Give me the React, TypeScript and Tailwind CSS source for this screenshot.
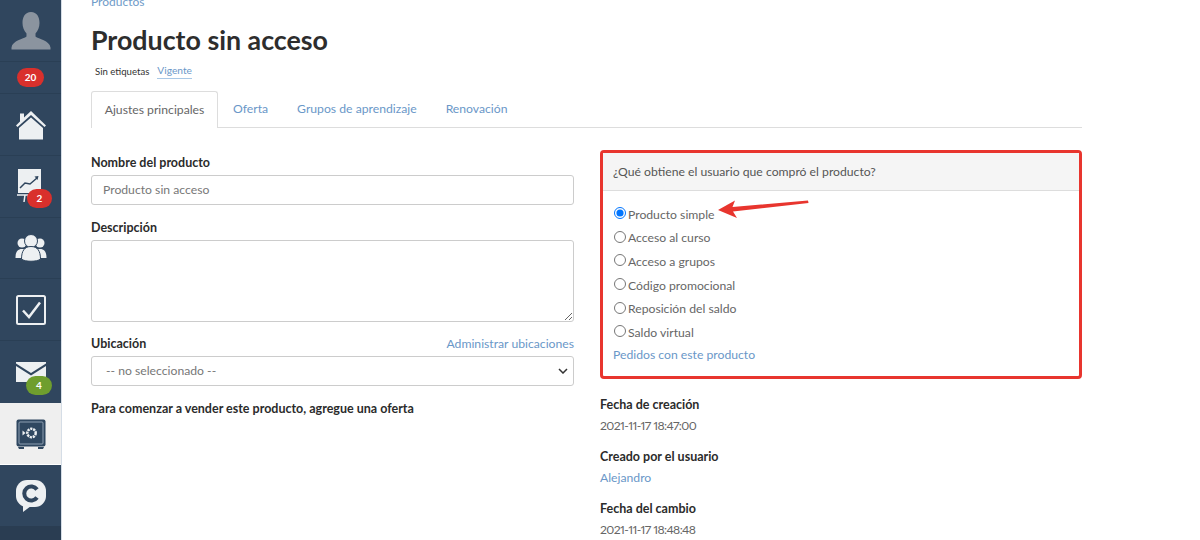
import React from "react";

const options = [
  "Producto simple",
  "Acceso al curso",
  "Acceso a grupos",
  "Código promocional",
  "Reposición del saldo",
  "Saldo virtual",
];

const tabs = ["Oferta", "Grupos de aprendizaje", "Renovación"];

function Badge({ text, color, className }: { text: string; color: string; className: string }) {
  return (
    <span
      className={`absolute flex h-[19px] items-center justify-center rounded-[10px] text-[10px] font-bold text-white ${color} ${className}`}
    >
      {text}
    </span>
  );
}

function Sidebar() {
  const cell = "relative flex items-center justify-center border-b border-[#2a3f55]";
  return (
    <aside className="flex h-[540px] w-[62px] shrink-0 flex-col border-r border-[#d5dde6] bg-[#30465e]">
      <div className={`${cell} h-[62px]`}>
        <svg width="40" height="40" viewBox="0 0 40 40">
          <path
            d="M20 1c6 0 8.500 5 8.500 11 0 4-1.500 8-4 10.500v3c3 2.500 14 4 15 11V38.500H0.500V36.500c1-7 12-8.500 15-11v-3c-2.500-2.500-4-6.500-4-10.500C11.500 6 14 1 20 1z"
            fill="#8b949f"
          />
        </svg>
      </div>
      <div className={`${cell} h-[32px]`}>
        <span className="flex h-[19px] w-[27px] items-center justify-center rounded-[10px] bg-[#d9302c] text-[10px] font-bold text-white">
          20
        </span>
      </div>
      <div className={`${cell} h-[62px]`}>
        <svg width="32" height="30" viewBox="0 0 32 30">
          <path d="M16 1 L31 15.500 L29.500 17 L16 5 L2.500 17 L1 15.500 L5 11.500 V3.500 H9 V7.500z" fill="#edf0f2" />
          <path d="M16 7.500 L28 18 V29.500 H4 V18z" fill="#edf0f2" />
        </svg>
      </div>
      <div className={`${cell} h-[62px]`}>
        <svg width="30" height="36" viewBox="0 0 30 36" className="mr-[6px]">
          <rect x="5" y="0" width="23" height="24" fill="#edf0f2" />
          <path d="M7 19 L12 14 L17 15 L24 9" fill="none" stroke="#30465e" strokeWidth="1.500" />
          <path d="M25.500 7 L21.500 7.500 L24.500 11z" fill="#30465e" />
          <path d="M4 26 H28 M12 26 L11 33 M15 26 L16 33" stroke="#edf0f2" strokeWidth="1.500" fill="none" />
        </svg>
        <Badge text="2" color="bg-[#d9302c]" className="left-[27px] top-[33px] w-[25px]" />
      </div>
      <div className={`${cell} h-[61px]`}>
        <svg width="32" height="28" viewBox="0 0 32 28">
          <circle cx="7" cy="9" r="4.500" fill="#edf0f2" />
          <circle cx="25" cy="9" r="4.500" fill="#edf0f2" />
          <path d="M0.500 24c0-6 2-9 6.500-9s6 3 6 9zM19 24c0-6 1.500-9 6-9s6.500 3 6.500 9z" fill="#edf0f2" />
          <circle cx="16" cy="7" r="6.500" fill="#edf0f2" stroke="#30465e" />
          <path d="M6.500 25c0-8 3-12.500 9.500-12.500S25.500 17 25.500 25c-3 3-16 3-19 0z" fill="#edf0f2" stroke="#30465e" />
        </svg>
      </div>
      <div className={`${cell} h-[62px]`}>
        <svg width="30" height="30" viewBox="0 0 30 30">
          <rect x="1" y="1" width="28" height="28" rx="1.500" fill="none" stroke="#edf0f2" strokeWidth="2" />
          <path d="M7 15.500 L13 22 L24 7.500" fill="none" stroke="#edf0f2" strokeWidth="2.500" />
        </svg>
      </div>
      <div className="relative flex h-[62px] items-center justify-center">
        <svg width="30" height="20" viewBox="0 0 30 20" className="mb-[1px]">
          <path d="M0 1.500 L15 11 L30 1.500 V0 H0z" fill="#edf0f2" />
          <path d="M0 4 L15 13.500 L30 4 V20 H0z" fill="#edf0f2" />
        </svg>
        <Badge text="4" color="bg-[#6f9e2e]" className="left-[26px] top-[35px] w-[26px]" />
      </div>
      <div className="flex h-[61px] items-center justify-center bg-[#efefef]">
        <svg width="30" height="30" viewBox="0 0 30 30">
          <rect x="0.500" y="0.500" width="29" height="27" rx="2" fill="#2f4760" />
          <rect x="3" y="3" width="24" height="22" rx="1" fill="none" stroke="#8ea0b2" strokeWidth="1" />
          <path d="M2 28h6v2H3zM22 28h6l-1 2h-5z" fill="#2f4760" />
          <circle cx="15.500" cy="14" r="4.200" fill="none" stroke="#edf0f2" strokeWidth="2.500" strokeDasharray="2.200 0.800" />
          <path d="M6.500 11.500 L9.500 14 L6.500 16.500z" fill="#edf0f2" />
        </svg>
      </div>
      <div className="h-[1px] bg-white" />
      <div className="flex h-[61px] items-center justify-center">
        <svg width="30" height="32" viewBox="0 0 30 32">
          <rect x="0" y="0" width="30" height="27" rx="11" fill="#edf0f2" />
          <path d="M7 23 L7 32 L15 26z" fill="#edf0f2" />
          <path d="M21 9.500 A7 7 0 1 0 21 17.500" fill="none" stroke="#30465e" strokeWidth="4" />
        </svg>
      </div>
      <div className="flex-1 bg-[#2a3d52]" />
    </aside>
  );
}

function Label({ children }: { children: React.ReactNode }) {
  return <div className="pt-[1px] text-[12.500px] font-bold leading-[18px] text-[#2b2b2b]">{children}</div>;
}

function Meta({ label, value, link }: { label: string; value: string; link?: boolean }) {
  return (
    <div className="h-[52px]">
      <Label>{label}</Label>
      <div
        className={`mt-[2px] leading-[20px] proportional-nums ${link ? "text-[#6a97c8]" : "tracking-[-0.600px] text-[#666]"}`}
      >
        {value}
      </div>
    </div>
  );
}

export default function App() {
  return (
    <div className="flex h-[540px] w-[1200px] overflow-hidden bg-white font-['Lato',sans-serif] text-[12.200px] text-[#666]">
      <Sidebar />
      <main className="w-[1020px] pl-[29px]">
        <div className="-mt-[7px] text-[12px] leading-[17px] text-[#6f9bc8]">Productos</div>
        <h1 className="mt-[14px] text-[26.800px] font-bold leading-[32px] text-[#2d2d2d]">Producto sin acceso</h1>
        <div className="mt-[5px] flex h-[18px] items-end pl-[4px]">
          <span className="text-[9.600px] text-[#333]">Sin etiquetas</span>
          <span className="ml-[8px] border-b border-[#a9c8e6] text-[10.200px] text-[#6a97c8]">Vigente</span>
        </div>
        <div className="mt-[12px] flex h-[37px] w-[991px] border-b border-[#ddd]">
          <div className="h-[37px] w-[127px] rounded-t-[3px] border border-b-0 border-[#ddd] bg-white pt-[9px] text-center leading-[18px] text-[#666]">
            Ajustes principales
          </div>
          <div className="flex gap-[29px] pl-[15px]">
            {tabs.map((t) => (
              <div key={t} className="pt-[9px] leading-[18px] text-[#6a97c8]">
                {t}
              </div>
            ))}
          </div>
        </div>
        <div className="mt-[25px] flex w-[991px] justify-between">
          <div className="w-[483px]">
            <Label>Nombre del producto</Label>
            <div className="mt-[3px] flex h-[30px] items-center rounded-[3px] border border-[#ccc] px-[11px] text-[#777]">
              Producto sin acceso
            </div>
            <div className="mt-[13px]">
              <Label>Descripción</Label>
            </div>
            <textarea className="mt-[3px] block h-[82px] w-full rounded-[3px] border border-[#ccc]" />
            <div className="mt-[12px] flex justify-between">
              <Label>Ubicación</Label>
              <span className="pt-[1px] leading-[18px] text-[#6a97c8]">Administrar ubicaciones</span>
            </div>
            <div className="mt-[3px] flex h-[30px] items-center justify-between rounded-[3px] border border-[#ccc] pl-[14px] pr-[5px] text-[#777]">
              <span>-- no seleccionado --</span>
              <svg width="10" height="6" viewBox="0 0 10 6">
                <path d="M1 1 L5 5 L9 1" fill="none" stroke="#333" strokeWidth="1.500" />
              </svg>
            </div>
            <div className="mt-[13px]">
              <Label>Para comenzar a vender este producto, agregue una oferta</Label>
            </div>
          </div>
          <div className="-mt-[3px] w-[482px]">
            <div className="h-[229px] rounded-[4px] border-[3px] border-[#e8352e]">
              <div className="flex h-[38px] items-center border-b border-[#ddd] bg-[#f5f5f5] px-[10px] pt-[1px] text-[#555]">
                ¿Qué obtiene el usuario que compró el producto?
              </div>
              <div className="relative px-[10px] pt-[12px]">
                {options.map((o, i) => (
                  <label key={o} className="flex h-[23.700px] items-center">
                    <input
                      type="radio"
                      name="kind"
                      defaultChecked={i === 0}
                      className="m-0 mb-[4px] ml-[1px] mr-[2px] h-[12px] w-[12px] shrink-0"
                    />
                    <span>{o}</span>
                  </label>
                ))}
                <div className="leading-[20px] text-[#6a97c8]">Pedidos con este producto</div>
                <svg width="93" height="24" viewBox="0 0 93 24" className="absolute left-[114px] top-[6px]">
                  <path d="M1 13 L18 3.500 L15.500 10 L91 3.500 L91.500 6 L16 14.500 L20 21z" fill="#e8352e" />
                </svg>
              </div>
            </div>
            <div className="mt-[16px]">
              <Meta label="Fecha de creación" value="2021-11-17 18:47:00" />
              <Meta label="Creado por el usuario" value="Alejandro" link />
              <Meta label="Fecha del cambio" value="2021-11-17 18:48:48" />
            </div>
          </div>
        </div>
      </main>
    </div>
  );
}
